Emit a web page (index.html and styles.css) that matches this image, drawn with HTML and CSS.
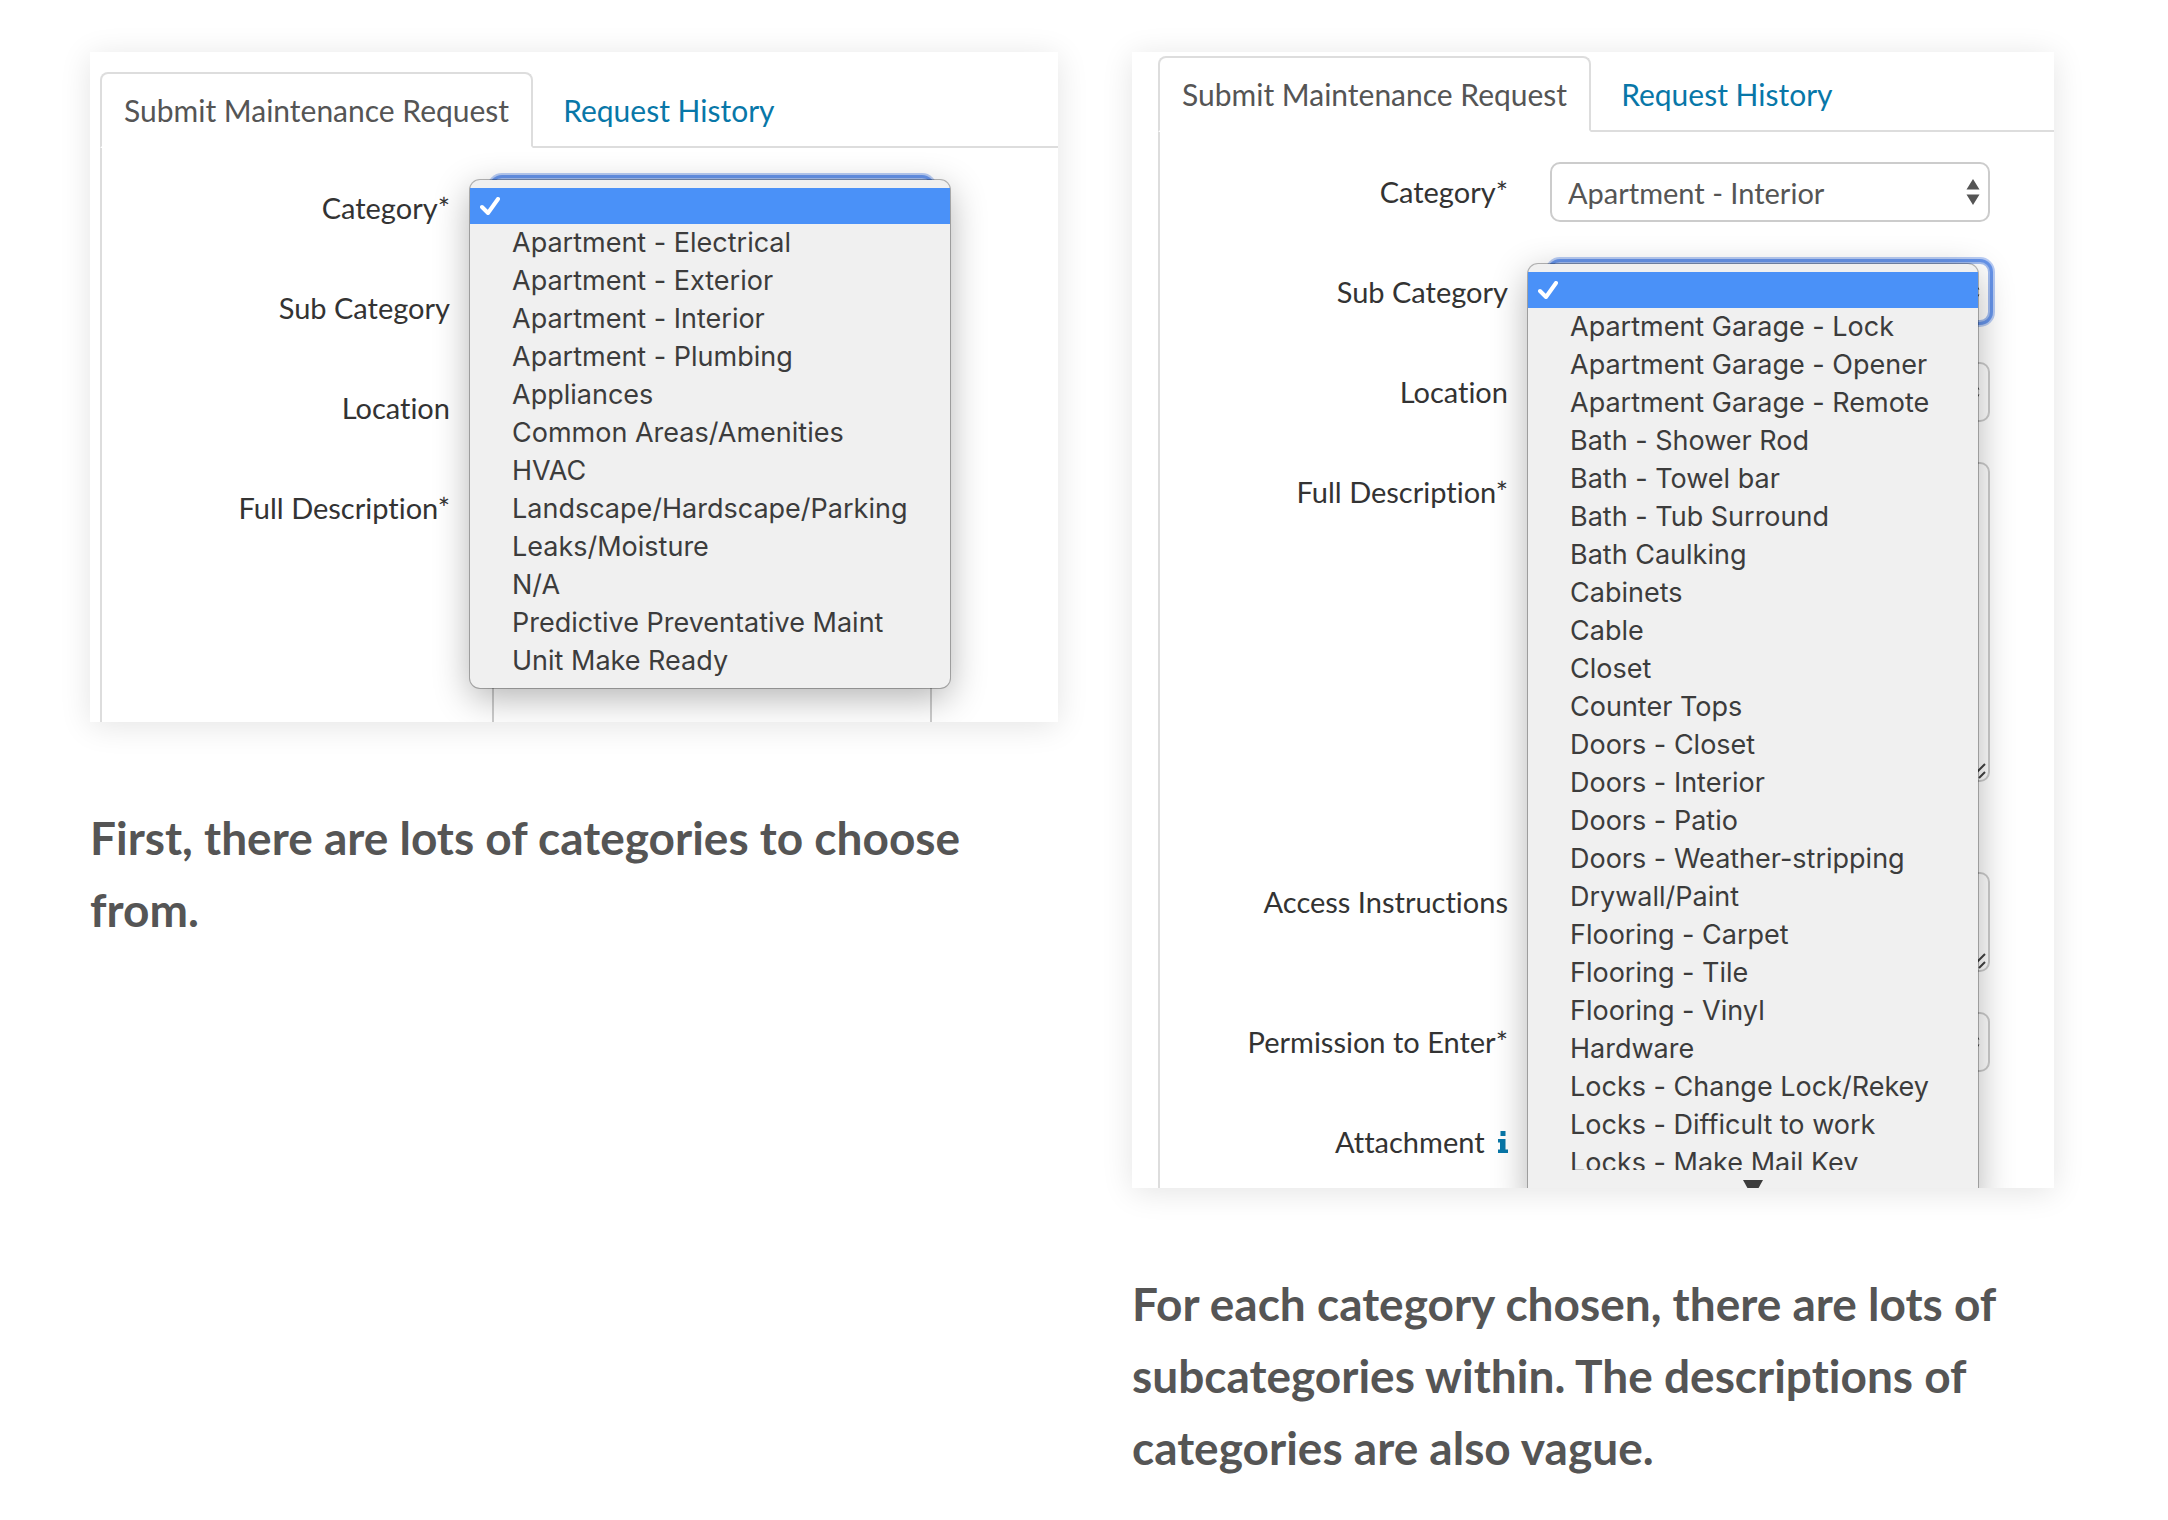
FILE: index.html
```html
<!DOCTYPE html>
<html lang="en">
<head>
<meta charset="utf-8">
<meta name="viewport" content="width=device-width, initial-scale=1">
<title>Maintenance request review</title>
<link rel="stylesheet" href="styles.css">
</head>
<body>
<svg class="sprite" aria-hidden="true">
  <symbol id="arrows" viewBox="0 0 14 26"><path d="M7 0 13.500 10.500H.5zM7 26 .5 15.500h13z"/></symbol>
  <symbol id="grip" viewBox="0 0 16 16"><path d="M1 14 14 1M8 15l6-6" fill="none" stroke="currentColor" stroke-width="2"/></symbol>
  <symbol id="check" viewBox="0 0 20 18"><path d="M2 10l6 6L18 2" fill="none" stroke="currentColor" stroke-width="4" stroke-linecap="round" stroke-linejoin="round"/></symbol>
</svg>
<main class="comparison">
  <section class="example">
    <div class="shot shot-category">
      <nav class="tabs">
        <a class="tab tab-active" href="#submit">Submit Maintenance Request</a>
        <a class="tab" href="#history">Request History</a>
      </nav>
      <form class="form">
        <label class="label" for="a-category">Category*</label>
        <div class="field field-open">
          <select class="control" id="a-category"><option></option></select>
          <svg class="arrows"><use href="#arrows"/></svg>
          <div class="menu menu-wide">
            <ul class="options" role="listbox" aria-label="Category">
              <li class="option option-selected" role="option" aria-selected="true"><svg class="check"><use href="#check"/></svg></li>
              <li class="option" role="option">Apartment - Electrical</li>
              <li class="option" role="option">Apartment - Exterior</li>
              <li class="option" role="option">Apartment - Interior</li>
              <li class="option" role="option">Apartment - Plumbing</li>
              <li class="option" role="option">Appliances</li>
              <li class="option" role="option">Common Areas/Amenities</li>
              <li class="option" role="option">HVAC</li>
              <li class="option" role="option">Landscape/Hardscape/Parking</li>
              <li class="option" role="option">Leaks/Moisture</li>
              <li class="option" role="option">N/A</li>
              <li class="option" role="option">Predictive Preventative Maint</li>
              <li class="option" role="option">Unit Make Ready</li>
            </ul>
          </div>
        </div>
        <label class="label" for="a-sub">Sub Category</label>
        <div class="field">
          <select class="control" id="a-sub"><option></option></select>
          <svg class="arrows"><use href="#arrows"/></svg>
        </div>
        <label class="label" for="a-location">Location</label>
        <div class="field">
          <select class="control" id="a-location"><option></option></select>
          <svg class="arrows"><use href="#arrows"/></svg>
        </div>
        <label class="label" for="a-description">Full Description*</label>
        <div class="field">
          <textarea class="control control-tall" id="a-description"></textarea>
        </div>
      </form>
    </div>
    <h2 class="caption">First, there are lots of categories to choose from.</h2>
  </section>

  <section class="example">
    <div class="shot shot-subcategory">
      <nav class="tabs">
        <a class="tab tab-active" href="#submit">Submit Maintenance Request</a>
        <a class="tab" href="#history">Request History</a>
      </nav>
      <form class="form">
        <label class="label" for="b-category">Category*</label>
        <div class="field">
          <select class="control" id="b-category"><option>Apartment - Interior</option></select>
          <svg class="arrows"><use href="#arrows"/></svg>
        </div>
        <label class="label" for="b-sub">Sub Category</label>
        <div class="field field-open">
          <select class="control" id="b-sub"><option></option></select>
          <svg class="arrows"><use href="#arrows"/></svg>
          <div class="menu menu-scrolling">
            <ul class="options" role="listbox" aria-label="Sub Category">
              <li class="option option-selected" role="option" aria-selected="true"><svg class="check"><use href="#check"/></svg></li>
              <li class="option" role="option">Apartment Garage - Lock</li>
              <li class="option" role="option">Apartment Garage - Opener</li>
              <li class="option" role="option">Apartment Garage - Remote</li>
              <li class="option" role="option">Bath - Shower Rod</li>
              <li class="option" role="option">Bath - Towel bar</li>
              <li class="option" role="option">Bath - Tub Surround</li>
              <li class="option" role="option">Bath Caulking</li>
              <li class="option" role="option">Cabinets</li>
              <li class="option" role="option">Cable</li>
              <li class="option" role="option">Closet</li>
              <li class="option" role="option">Counter Tops</li>
              <li class="option" role="option">Doors - Closet</li>
              <li class="option" role="option">Doors - Interior</li>
              <li class="option" role="option">Doors - Patio</li>
              <li class="option" role="option">Doors - Weather-stripping</li>
              <li class="option" role="option">Drywall/Paint</li>
              <li class="option" role="option">Flooring - Carpet</li>
              <li class="option" role="option">Flooring - Tile</li>
              <li class="option" role="option">Flooring - Vinyl</li>
              <li class="option" role="option">Hardware</li>
              <li class="option" role="option">Locks - Change Lock/Rekey</li>
              <li class="option" role="option">Locks - Difficult to work</li>
              <li class="option" role="option">Locks - Make Mail Key</li>
            </ul>
            <svg class="more" viewBox="0 0 20 18"><path d="M0 0h20L10 18z"/></svg>
          </div>
        </div>
        <label class="label" for="b-location">Location</label>
        <div class="field">
          <select class="control" id="b-location"><option></option></select>
          <svg class="arrows"><use href="#arrows"/></svg>
        </div>
        <label class="label" for="b-description">Full Description*</label>
        <div class="field field-counted">
          <textarea class="control control-tall" id="b-description"></textarea>
          <svg class="grip"><use href="#grip"/></svg>
        </div>
        <label class="label" for="b-access">Access Instructions</label>
        <div class="field">
          <textarea class="control control-short" id="b-access"></textarea>
          <svg class="grip"><use href="#grip"/></svg>
        </div>
        <label class="label" for="b-permission">Permission to Enter*</label>
        <div class="field">
          <select class="control" id="b-permission"><option></option></select>
          <svg class="arrows"><use href="#arrows"/></svg>
        </div>
        <span class="label">Attachment <svg class="info" viewBox="0 0 10 22"><path d="M2.500 0H7.500V5H2.500zM0 8H7.500V18.500H10V22H0V18.500H2V11.500H0z"/></svg></span>
      </form>
    </div>
    <h2 class="caption">For each category chosen, there are lots of subcategories within. The descriptions of categories are also vague.</h2>
  </section>
</main>
</body>
</html>
```
FILE: styles.css
```css
* { box-sizing: border-box; }

body {
  margin: 0;
  background: #fff;
  color: #333;
  font-family: Lato, "Open Sans", sans-serif;
  font-size: 29px;
  font-variant-ligatures: none;
}

.sprite { display: none; }

.comparison {
  display: grid;
  grid-template-columns: 968fr 922fr;
  gap: 74px;
  padding: 52px 114px 0 90px;
}

/* Cropped views of the request form */
.shot {
  overflow: hidden;
  background: #fff;
  box-shadow: 0 4px 30px rgba(0, 0, 0, .11);
}
.shot-category { max-height: 670px; padding: 20px 0 0 10px; }
.shot-subcategory { max-height: 1136px; padding: 4px 0 0 26px; }

.tabs {
  display: flex;
  gap: 6px;
  border-bottom: 2px solid #ddd;
}
.tab {
  margin-bottom: -2px;
  padding: 0 22px;
  border: 2px solid transparent;
  border-radius: 8px 8px 0 0;
  color: #0877a8;
  font-size: 30px;
  line-height: 72px;
  text-decoration: none;
  white-space: nowrap;
}
.tab-active {
  border-color: #ddd #ddd #fff;
  background: #fff;
  color: #555;
}

.form {
  display: grid;
  grid-template-columns: 348px 440px;
  gap: 40px 42px;
  padding: 30px 0;
  border-left: 2px solid #ddd;
}
.label {
  line-height: 60px;
  text-align: right;
  white-space: nowrap;
}
.field { position: relative; }
.field-counted { padding-bottom: 50px; }

.control {
  display: block;
  width: 100%;
  height: 60px;
  padding: 0 16px;
  border: 2px solid #ccc;
  border-radius: 10px;
  background: #fff;
  color: #555;
  font: inherit;
  appearance: none;
  resize: none;
}
.control-tall { height: 320px; }
.control-short { height: 100px; }

.arrows {
  position: absolute;
  top: 17px;
  right: 10px;
  width: 14px;
  height: 26px;
  fill: #555;
}
.grip {
  position: absolute;
  top: 301px;
  right: 3px;
  width: 16px;
  height: 16px;
  color: #444;
}
.control-short + .grip { top: 81px; }
.info {
  width: 10px;
  height: 22px;
  margin-left: 6px;
  fill: #0877a8;
}

/* Open drop-down */
.field-open { z-index: 1; }
.field-open .control {
  border-color: #a3bdf0;
  box-shadow: 0 0 0 3px #6694ea, 0 0 0 5px #b9cdf5;
}
.menu {
  position: absolute;
  top: 2px;
  left: -22px;
  padding: 8px 0;
  border-radius: 10px;
  background: #f0f0f0;
  box-shadow: 0 0 0 1px rgba(0, 0, 0, .28), 0 10px 36px rgba(0, 0, 0, .3);
}
.menu-wide { width: 480px; }
.menu-scrolling { width: 450px; }
.menu-scrolling .options { height: 898px; overflow: hidden; }
.options {
  margin: 0;
  padding: 0;
  list-style: none;
}
.option {
  padding-left: 42px;
  color: #3c3c3c;
  font-family: Inter, sans-serif;
  font-size: 27px;
  line-height: 38px;
  white-space: nowrap;
}
.option-selected {
  display: flex;
  align-items: center;
  height: 36px;
  padding-left: 10px;
  background: #4a91f8;
  color: #fff;
}
.check { width: 20px; height: 18px; }
.more {
  display: block;
  width: 20px;
  height: 18px;
  margin: 10px auto 0;
  fill: #3c3c3c;
}

.caption {
  margin: 80px 0 0;
  color: #555;
  font-size: 46px;
  font-weight: 700;
  line-height: 72px;
}
```
